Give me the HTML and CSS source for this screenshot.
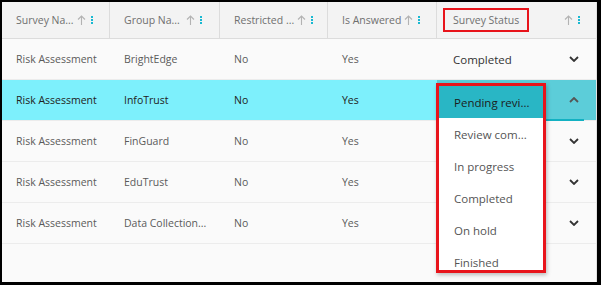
FILE: index.html
```html
<!DOCTYPE html>
<html>
<head>
    <title>Surveys</title>
    <link rel="stylesheet" href="styles.css">
</head>
<body>
    <div class="frame">
        <div class="grid">
            <div class="head">
                <div class="hcell"><span class="htext">Survey Na...</span><svg class="sort" viewBox="0 0 9 10"><path d="M4.5 10V1M1 4.5l3.5-3.5 3.5 3.5"/></svg><span class="kebab"><i></i><i></i><i></i></span></div>
                <div class="hcell"><span class="htext">Group Na...</span><svg class="sort" viewBox="0 0 9 10"><path d="M4.5 10V1M1 4.5l3.5-3.5 3.5 3.5"/></svg><span class="kebab"><i></i><i></i><i></i></span></div>
                <div class="hcell"><span class="htext">Restricted ...</span><svg class="sort" viewBox="0 0 9 10"><path d="M4.5 10V1M1 4.5l3.5-3.5 3.5 3.5"/></svg><span class="kebab"><i></i><i></i><i></i></span></div>
                <div class="hcell"><span class="htext">Is Answered</span><svg class="sort" viewBox="0 0 9 10"><path d="M4.5 10V1M1 4.5l3.5-3.5 3.5 3.5"/></svg><span class="kebab"><i></i><i></i><i></i></span></div>
                <div class="hcell last"><span class="htext marked">Survey Status</span><svg class="sort" viewBox="0 0 9 10"><path d="M4.5 10V1M1 4.5l3.5-3.5 3.5 3.5"/></svg><span class="kebab"><i></i><i></i><i></i></span></div>
            </div>

            <div class="row">
                <div class="cell">Risk Assessment</div>
                <div class="cell">BrightEdge</div>
                <div class="cell">No</div>
                <div class="cell">Yes</div>
                <div class="cell status"><span>Completed</span><svg class="chev" viewBox="0 0 10 6"><path d="M1 1l4 4 4-4"/></svg></div>
            </div>
            <div class="row active">
                <div class="cell">Risk Assessment</div>
                <div class="cell">InfoTrust</div>
                <div class="cell">No</div>
                <div class="cell">Yes</div>
                <div class="cell status open"><svg class="chev" viewBox="0 0 10 6"><path d="M1 5l4-4 4 4"/></svg></div>
            </div>
            <div class="row">
                <div class="cell">Risk Assessment</div>
                <div class="cell">FinGuard</div>
                <div class="cell">No</div>
                <div class="cell">Yes</div>
                <div class="cell status"><svg class="chev" viewBox="0 0 10 6"><path d="M1 1l4 4 4-4"/></svg></div>
            </div>
            <div class="row">
                <div class="cell">Risk Assessment</div>
                <div class="cell">EduTrust</div>
                <div class="cell">No</div>
                <div class="cell">Yes</div>
                <div class="cell status"><svg class="chev" viewBox="0 0 10 6"><path d="M1 1l4 4 4-4"/></svg></div>
            </div>
            <div class="row">
                <div class="cell">Risk Assessment</div>
                <div class="cell">Data Collection...</div>
                <div class="cell">No</div>
                <div class="cell">Yes</div>
                <div class="cell status"><svg class="chev" viewBox="0 0 10 6"><path d="M1 1l4 4 4-4"/></svg></div>
            </div>
        </div>

        <ul class="dropdown">
            <li class="selected">Pending revi...</li>
            <li>Review com...</li>
            <li>In progress</li>
            <li>Completed</li>
            <li>On hold</li>
            <li>Finished</li>
        </ul>
    </div>
</body>
</html>
```

FILE: styles.css
```css
body {
    margin: 0;
    background-color: #000;
    font-family: "Open Sans", Arial, sans-serif;
}

.frame {
    position: relative;
    width: 595px;
    height: 280px;
    margin: 2px 0 0 2px;
    background-color: #fafafa;
    border-right: 1px solid #e2e2e2;
    box-sizing: border-box;
    overflow: hidden;
}

.grid {
    display: grid;
    grid-template-columns: 108px 110px 108px 109px 159px;
}

.head,
.row {
    display: contents;
}

.hcell {
    display: flex;
    align-items: center;
    height: 36px;
    padding: 0 17px 0 14px;
    background-color: #f3f3f3;
    border-right: 1px solid #dcdcdc;
    border-bottom: 1px solid #dcdcdc;
    font-size: 10.5px;
    color: #6f6f6f;
}

.hcell.last {
    border-right: none;
    padding-left: 6px;
    padding-right: 16px;
}

.htext {
    white-space: nowrap;
}

.htext.marked {
    padding: 3px 8px;
    border: 2px solid #e8141b;
}

.sort {
    flex-shrink: 0;
    width: 9px;
    height: 10px;
    margin-left: auto;
    padding-left: 3px;
    fill: none;
    stroke: #b3b3b3;
    stroke-width: 1.1;
}

.kebab {
    display: flex;
    flex-direction: column;
    gap: 1px;
    margin-left: 5px;
}

.kebab i {
    width: 2px;
    height: 2px;
    background-color: #19b9d2;
}

.cell {
    display: flex;
    align-items: center;
    height: 40px;
    padding-left: 14px;
    border-bottom: 1px solid #ececec;
    font-size: 10.5px;
    color: #5a5a5a;
    white-space: nowrap;
}

.cell.status {
    padding-left: 16px;
    padding-right: 17px;
    font-size: 11.5px;
    color: #333;
}

.chev {
    width: 10px;
    height: 6px;
    margin-left: auto;
    fill: none;
    stroke: #333;
    stroke-width: 1.8;
}

.row.active .cell {
    background-color: #7df0fc;
    color: #222;
}

.row.active .cell.status {
    position: relative;
    background-color: #5ccdd9;
}

.row.active .cell.status::after {
    content: "";
    position: absolute;
    left: 8px;
    right: 12px;
    bottom: -1px;
    height: 2px;
    background-color: #13b1c2;
}

.row.active .chev {
    stroke: #555;
}

.dropdown {
    position: absolute;
    left: 434px;
    top: 81px;
    width: 104px;
    height: 184px;
    margin: 0;
    padding: 0;
    overflow: hidden;
    list-style: none;
    background-color: #fff;
    border: 3px solid #e8141b;
    box-shadow: 1px 2px 4px rgba(0, 0, 0, 0.25);
}

.dropdown li {
    display: flex;
    align-items: center;
    height: 32px;
    padding-left: 15px;
    font-size: 11.5px;
    color: #555;
    white-space: nowrap;
}

.dropdown li.selected {
    background-color: #29b6c5;
    color: #1c1c1c;
}
```
